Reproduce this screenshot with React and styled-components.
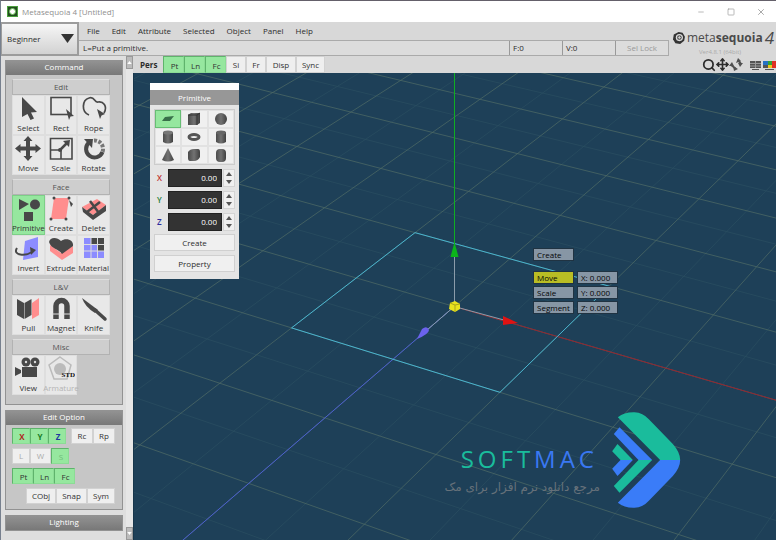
import React from "react";
import styled, { createGlobalStyle, css } from "styled-components";
import { Minus, Square, X as CloseIcon, Search, Move } from "lucide-react";

const GlobalStyle = createGlobalStyle`
  * { box-sizing: border-box; }
  body { margin: 0; }
  body, button, input, select {
    font-family: "Open Sans", "Noto Sans", sans-serif;
    font-size: 8px;
    line-height: 12px;
    color: #2c2c2c;
  }
  button { padding: 0; border: 0; background: none; }
`;

const ink = "#484848";
const green = "#96e79f";

const Window = styled.div`
  min-height: 100vh;
  display: flex;
  flex-direction: column;
  background: #d8d8d8;
  border-top: 1px solid #64606a;
  border-left: 1px solid #77808e;
`;

const TitleBar = styled.header`
  height: 21px;
  display: flex;
  align-items: center;
  gap: 4px;
  padding: 0 10px 0 6px;
  background: #fff;
  color: #8f8f8f;
`;

const TitleText = styled.span`
  flex: 1;
`;

const WindowButtons = styled.div`
  display: flex;
  gap: 20px;
  button { width: 10px; height: 12px; display: grid; place-items: center; }
  svg { color: #999; }
`;

const TopArea = styled.div`
  display: flex;
  height: 34px;
`;

const ModeBox = styled.div`
  position: relative;
  width: 78px;
  border: 2px solid #9c9c9c;
  border-left-width: 1px;
  background: linear-gradient(#f6f6f6, #d2d2d2);
  svg { position: absolute; right: 3px; top: 10px; pointer-events: none; }
`;

const ModeSelect = styled.select`
  appearance: none;
  width: 100%;
  height: 100%;
  padding: 0 5px;
  border: 0;
  background: none;
`;

const MenuColumn = styled.div`
  flex: 1;
  display: flex;
  flex-direction: column;
  min-width: 0;
`;

const MenuBar = styled.nav`
  height: 18px;
  display: flex;
  align-items: center;
  gap: 12px;
  padding: 0 8px;
`;

const StatusBar = styled.div`
  height: 16px;
  display: flex;
  background: #dcdcdc;
  border: 1px solid #aaa;
  border-left: 0;
`;

const StatusText = styled.span`
  flex: 1;
  padding: 1px 4px;
`;

const StatusCell = styled.span`
  width: 53px;
  padding: 1px 3px;
  border-left: 1px solid #999;
`;

const LockButton = styled.button`
  width: 53px;
  border-left: 1px solid #999;
  color: #999;
`;

const Brand = styled.div`
  width: 107px;
  padding: 6px 2px 0 4px;
  color: #4a4a4a;
`;

const BrandRow = styled.div`
  height: 20px;
  display: flex;
  align-items: center;
  gap: 2px;
  font-size: 12px;
  line-height: 20px;
`;

const BrandFour = styled.i`
  font-size: 17px;
`;

const Version = styled.div`
  padding-left: 26px;
  font-size: 6px;
  line-height: 8px;
  color: #aaa;
`;

const Body = styled.div`
  flex: 1;
  display: flex;
  min-height: 0;
`;

const Sidebar = styled.aside`
  width: 132px;
  display: flex;
  justify-content: space-between;
  background: #dedede;
`;

const Panels = styled.div`
  width: 122px;
  padding: 4px 0 0 4px;
  display: flex;
  flex-direction: column;
  gap: 5px;
`;

const Panel = styled.section`
  border: 1px solid #929292;
  background: #c6c6c6;
`;

const PanelTitle = styled.h2`
  margin: 0;
  height: 14px;
  font-size: 8px;
  line-height: 12px;
  font-weight: 400;
  text-align: center;
  color: #fff;
  background: linear-gradient(#929292, #787878);
`;

const PanelBody = styled.div`
  padding: 4px 12px 9px 6px;
  display: flex;
  flex-direction: column;
  gap: 4px;
`;

const GroupTitle = styled.h3`
  margin: 0;
  height: 16px;
  font-size: 8px;
  line-height: 14px;
  font-weight: 400;
  text-align: center;
  color: #555;
  background: #cecece;
  border: 1px solid #b2b2b2;
  border-top-color: #dedede;
`;

const ToolGrid = styled.div`
  display: grid;
  grid-template-columns: repeat(3, minmax(0, 1fr));
`;

const ToolButton = styled.button`
  height: 40px;
  display: flex;
  flex-direction: column;
  align-items: center;
  justify-content: flex-end;
  background: ${(p) => (p.$on ? green : "#e8e8e8")};
  border: 1px solid ${(p) => (p.$on ? "#7dcf88" : "#dedede")};
  color: ${(p) => (p.$faded ? "#b4b4b4" : "#333")};
  white-space: nowrap;
  svg { flex: none; }
`;

const Scroll = styled.div`
  width: 7px;
  display: flex;
  flex-direction: column;
  justify-content: space-between;
  background: #e6e6e6;
  button { height: 13px; border: 1px solid #999; background: #bbb; color: #fff; display: grid; place-items: center; }
`;

const OptionRows = styled.div`
  padding: 3px 5px 5px 6px;
  display: flex;
  flex-direction: column;
  gap: 4px;
`;

const OptionRow = styled.div`
  display: flex;
  padding-left: ${(p) => (p.$indent ? 14 : 0)}px;
`;

const toggled = css`
  background: ${green};
  border-color: #5fb36c #8bdc95 #8bdc95 #5fb36c;
  padding: 2px 0 0 2px;
`;

const Toggle = styled.button`
  width: ${(p) => p.$w || 18}px;
  height: ${(p) => p.$h || 16}px;
  border: 1px solid #d2d2d2;
  background: #efefef;
  color: ${(p) => p.$color || "#333"};
  font-weight: ${(p) => (p.$bold ? 700 : 400)};
  margin-left: ${(p) => (p.$apart ? 5 : 0)}px;
  ${(p) => p.$on && toggled}
`;

const Main = styled.main`
  flex: 1;
  min-width: 0;
  display: flex;
  flex-direction: column;
`;

const ViewBar = styled.div`
  height: 17px;
  display: flex;
  padding-left: 7px;
`;

const ViewName = styled.strong`
  width: 23px;
  line-height: 18px;
`;

const ViewTools = styled.div`
  margin-left: auto;
  display: flex;
  align-items: center;
  color: #505050;
  button { display: grid; }
`;

const Viewport = styled.div`
  position: relative;
  flex: 1;
  overflow: hidden;
  background: #1e4058;
  border-left: 1px solid #17364b;
`;

const Scene = styled.svg`
  position: absolute;
  inset: 0;
  width: 100%;
  height: 100%;
`;

const Palette = styled.section`
  position: absolute;
  left: 16px;
  top: 10px;
  width: 89px;
  background: #e4e4e4;
  border-top: 7px solid #fff;
  display: flex;
  flex-direction: column;
`;

const PaletteTitle = styled.h2`
  margin: 0;
  height: 15px;
  font-size: 8px;
  line-height: 15px;
  font-weight: 400;
  text-align: center;
  color: #fff;
  background: #979797;
`;

const PaletteBody = styled.div`
  padding: 4px 4px 6px;
  display: flex;
  flex-direction: column;
  gap: 3px;
`;

const ShapeGrid = styled.div`
  display: grid;
  grid-template-columns: repeat(3, 1fr);
  border: 1px solid #ccc;
`;

const ShapeButton = styled.button`
  height: 18px;
  display: grid;
  place-items: center;
  background: ${(p) => (p.$on ? green : "#f0f0f0")};
  border: 1px solid ${(p) => (p.$on ? "#68be75" : "#e2e2e2")};
`;

const AxisRow = styled.div`
  display: flex;
  align-items: center;
  height: 19px;
  label { width: 14px; padding-left: 3px; font-weight: 600; color: ${(p) => p.$color}; }
  input {
    flex: 1;
    min-width: 0;
    height: 18px;
    padding: 0 4px;
    border: 1px solid #222;
    background: #333;
    color: #fff;
    text-align: right;
  }
`;

const Spinner = styled.div`
  width: 12px;
  height: 18px;
  margin-left: 1px;
  display: grid;
  background: #f0f0f0;
  border: 1px solid #d4d4d4;
  button { display: grid; place-items: center; }
`;

const WideButton = styled.button`
  height: 17px;
  margin-bottom: 1px;
  background: #f0f0f0;
  border: 1px solid #d0d0d0;
`;

const Handles = styled.div`
  position: absolute;
  left: 399px;
  top: 175px;
  display: grid;
  grid-template-columns: 41px 41px;
  gap: 2px 3px;
`;

const Handle = styled.button`
  height: 13px;
  padding: 0 3px;
  line-height: 12px;
  text-align: left;
  white-space: nowrap;
  color: #050505;
  border: 1px solid #203342;
  background: ${(p) => (p.$on ? "#b9bd24" : "#8796a5")};
  ${(p) => p.$first && css`
    grid-column: 1 / -1;
    width: 41px;
    margin-bottom: 8px;
  `}
`;

const Watermark = styled.div`
  position: absolute;
  right: 94px;
  bottom: 30px;
  display: flex;
  align-items: center;
  gap: 11px;
`;

const WatermarkText = styled.div`
  display: flex;
  flex-direction: column;
  align-items: flex-end;
  padding-top: 22px;
`;

const Wordmark = styled.div`
  padding-right: 2px;
  font-size: 24px;
  line-height: 32px;
  letter-spacing: 4px;
  color: #1abc9c;
  span { color: #3a78f2; }
`;

const Tagline = styled.div`
  font-family: "DejaVu Sans", sans-serif;
  font-size: 12px;
  line-height: 24px;
  white-space: nowrap;
  color: #66717a;
`;

const Tri = ({ up, size = 6, color = "#555" }) => (
  <svg width={size} height={size - 2} viewBox="0 0 6 4" aria-hidden="true">
    <path d={up ? "M0 4L3 0L6 4Z" : "M0 0L3 4L6 0Z"} fill={color} />
  </svg>
);

const ToolIcon = ({ children }) => (
  <svg width="28" height="27" viewBox="0 0 28 27" fill={ink} aria-hidden="true">{children}</svg>
);

const red = "#ff8e8e";
const violet = "#8c8cff";

const toolIcons = {
  Select: <path d="M8 2L23 17L17 17.500L20 23.500L16.500 25L13.500 19L8 22Z" />,
  Rect: <><rect x="4" y="2.500" width="20" height="17" fill="none" stroke={ink} strokeWidth="1.600" /><path d="M19 14L27 21L23.500 21.500L22 25Z" /></>,
  Rope: <><path d="M9 20C1 17 2 5 9 3C15 1 14 8 18 7C23 6 28 11 24 18" fill="none" stroke={ink} strokeWidth="1.700" /><path d="M17 14L25 19L21.500 20.500L20 24Z" /></>,
  Move: <path d="M14 1L18.500 6H16V11.500H21.500V9L27 13.500L21.500 18V15.500H16V21H18.500L14 26L9.500 21H12V15.500H6.500V18L1 13.500L6.500 9V11.500H12V6H9.500Z" />,
  Scale: <><path d="M3.500 3.500H25V24H3.500ZM3.500 15H14V24" fill="none" stroke={ink} strokeWidth="1.600" /><path d="M13 15L20 8" stroke={ink} strokeWidth="2.500" /><path d="M16 6L23 5L22 12Z" /><circle cx="13" cy="15" r="2" /></>,
  Rotate: <><path d="M9 7.500A8.500 8.500 0 1 0 22.500 17" fill="none" stroke={ink} strokeWidth="4" /><path d="M4 4L13 4L12 13Z" /><path d="M14 5.500A8.500 8.500 0 0 1 22.500 17" fill="none" stroke="#777" strokeWidth="4" strokeDasharray="3 1.500" /></>,
  Primitive: <><path d="M5 4L15 9L5 15Z" /><circle cx="21" cy="9.500" r="5" /><rect x="10" y="17" width="9" height="9" /></>,
  Create: <><path d="M7 3H22L19 24H4Z" fill={red} /><circle cx="7" cy="3" r="1.500" /><circle cx="22" cy="3" r="1.500" /><circle cx="19" cy="24" r="1.500" /><circle cx="4" cy="24" r="1.500" /><path d="M22 5L26 9L24 12Z" /></>,
  Delete: <><path d="M2 12L17 4L26 10L13 20Z" fill={red} /><path d="M2 12L13 20V25L3 17ZM13 20L26 10V16L13 25Z" /><path d="M10 6L19 18M20 7L7 17" stroke={ink} strokeWidth="2.500" /></>,
  Invert: <><path d="M11 6L24 2V22L9 25Z" fill={violet} /><path d="M3 13C-2 21 12 21 18 17" fill="none" stroke={ink} strokeWidth="2" /><path d="M16 12L22 15L17 20Z" /></>,
  Extrude: <><path d="M3 10V16L15 25L26 18V11L14 18Z" fill={red} /><path d="M2 7C3 2 10 2 14 6C19 2 27 5 26 11L15 19C12 14 4 14 2 7Z" /></>,
  Material: <><path d="M4 3H24V23H4Z" fill={violet} /><path d="M11 3H24V16H18V10H11Z" /><path d="M11 3V23M17.500 3V23M4 9.500H24M4 16H24" stroke="#ddd" /></>,
  Pull: <><path d="M3 4L10 8V24L3 20ZM10.500 8L17.500 4V20L10.500 24Z" /><path d="M18 8L25 3V20L18 24Z" fill={red} /></>,
  Magnet: <><path d="M9 24V11A5 5 0 0 1 20 11V24" fill="none" stroke={ink} strokeWidth="5.500" /><path d="M5 19H13M16 19H24" stroke="#ddd" /></>,
  Knife: <><path d="M2 3L18 15L15 18Q5 12 2 3Z" /><path d="M15 15L25 24" stroke={ink} strokeWidth="3.500" strokeLinecap="round" /></>,
  View: <><circle cx="12" cy="7" r="4.500" /><circle cx="21" cy="7" r="4.500" /><path d="M8 12H23V22H8ZM1 12L7 15V18L1 21Z" /><circle cx="12" cy="7" r="1.200" fill="#ddd" /><circle cx="21" cy="7" r="1.200" fill="#ddd" /></>,
  Armature: <><path d="M13 2L24 10L20 24H7L2 10Z" fill="none" stroke="#bbb" strokeWidth="1.500" /><circle cx="13" cy="14" r="6" fill="#bbb" /><text x="28" y="22" textAnchor="end" fontSize="7" fontWeight="700" fill="#111" fontFamily="Liberation Serif, serif">STD</text></>,
};

const groups = [
  ["Edit", ["Select", "Rect", "Rope", "Move", "Scale", "Rotate"]],
  ["Face", ["Primitive", "Create", "Delete", "Invert", "Extrude", "Material"]],
  ["L&V", ["Pull", "Magnet", "Knife"]],
  ["Misc", ["View", "Armature"]],
];

const ShapeIcon = ({ children }) => (
  <svg width="16" height="16" viewBox="0 0 16 16" aria-hidden="true">
    <defs>
      <linearGradient id="solid"><stop stopColor="#4a4a4a" /><stop offset="0.500" stopColor="#727272" /><stop offset="1" stopColor="#404040" /></linearGradient>
    </defs>
    <g fill="url(#solid)">{children}</g>
  </svg>
);

const shapes = [
  ["Plane", <path d="M5 6L14 5L10 10L2 10Z" fill="#39704a" />],
  ["Box", <><path d="M2 4L5 2H14V12L11 14H2Z" /><path d="M2 4H11V14M11 4L14 2" stroke="#333" fill="none" /></>],
  ["Sphere", <circle cx="8" cy="8" r="6" />],
  ["Cylinder", <><path d="M3 3V13Q8 16 13 13V3Z" /><ellipse cx="8" cy="3.500" rx="5" ry="2" fill="#777" /></>],
  ["Torus", <ellipse cx="8" cy="8" rx="5" ry="2.500" fill="none" stroke="#555" strokeWidth="3" />],
  ["Tube", <><path d="M3 3V13Q8 16 13 13V3Z" /><ellipse cx="8" cy="3.500" rx="5" ry="2" fill="#666" /></>],
  ["Cone", <path d="M8 1L14 13Q8 16 2 13Z" />],
  ["Rounded box", <path d="M2 5Q4 2 8 2H12Q14 2 14 5V10Q12 14 8 14H4Q2 14 2 11Z" />],
  ["Capsule", <rect x="3" y="2" width="10" height="13" rx="4" />],
];

/* Perspective mapping of the ground plane to viewport coordinates. */
const project = (u, v) => {
  const w = 1 - 0.025 * u - 0.05 * v;
  return [(454.3 + 89.1 * u - 80.95 * v) / w - 134, (306.5 + 21.6 * u + 34.8 * v) / w - 73];
};
const segment = (a, b) => `M${project(...a).join(" ")}L${project(...b).join(" ")}`;
const range = Array.from({ length: 61 }, (_, i) => i / 2 - 20);
const gridPath = (major) =>
  range
    .filter((n) => Number.isInteger(n) === major && n <= 7)
    .map((n) => segment([n, -20], [n, 8]) + segment([-20, n], [8, n]))
    .join("");
const [ox, oy] = project(0, 0);

const SceneDrawing = () => (
  <Scene aria-hidden="true" fill="none">
    <path d={gridPath(false)} stroke="#2b4f61" strokeWidth="1" opacity="0.700" />
    <path d={gridPath(true)} stroke="#4e6a66" strokeWidth="1" opacity="0.750" />
    <path d={segment([0, 0], [7, 0])} stroke="#94252f" />
    <path d={segment([0, 0], [0, 5])} stroke="#4a5ed0" />
    <path d={segment([-1, -1], [1, -1]) + segment([1, -1], [1, 1]) + segment([1, 1], [-1, 1]) + segment([-1, 1], [-1, -1])} stroke="#48b4d0" />
    <path d={`M320.500 ${oy}V0`} stroke="#0fae22" />
    <path d={`M320.500 180V${oy}M${ox} ${oy}L370 247M${ox} ${oy}L293 257`} stroke="#8a9caa" />
    <path d="M320.500 169L324.500 184H316.500Z" fill="#0bb51b" />
    <path d="M384 250L369 243V252Z" fill="#e01313" />
    <path d="M283 266L288 256Q293 252 295 257Q295 261 283 266Z" fill="#6b62ee" />
    <path d="M316 230L321 228L326 231V236L321 239L315 236Z" fill="#e8e31e" />
    <path d="M316 230L321 232L326 231M321 232V239" stroke="#aaa51c" />
  </Scene>
);

const axes = [["X", "#c23030"], ["Y", "#24803a"], ["Z", "#2c2c9e"]];

export default function App() {
  return (
    <Window>
      <GlobalStyle />
      <TitleBar>
        <svg width="11" height="11" viewBox="0 0 11 11" aria-hidden="true">
          <rect width="11" height="11" fill="#4aa03c" /><rect x="1" y="1" width="9" height="9" fill="#234d20" /><circle cx="5.500" cy="5.500" r="3" fill="#fff" stroke="#69be56" strokeWidth="1" />
        </svg>
        <TitleText>Metasequoia 4 [Untitled]</TitleText>
        <WindowButtons>
          <button aria-label="Minimize"><Minus size={8} /></button>
          <button aria-label="Maximize"><Square size={8} /></button>
          <button aria-label="Close"><CloseIcon size={10} /></button>
        </WindowButtons>
      </TitleBar>
      <TopArea>
        <ModeBox>
          <ModeSelect aria-label="Mode" defaultValue="Beginner"><option>Beginner</option></ModeSelect>
          <svg width="13" height="10" aria-hidden="true"><path d="M0 0H13L6.500 9Z" fill="#333" /></svg>
        </ModeBox>
        <MenuColumn>
          <MenuBar>
            {["File", "Edit", "Attribute", "Selected", "Object", "Panel", "Help"].map((m) => <button key={m}>{m}</button>)}
          </MenuBar>
          <StatusBar>
            <StatusText>L=Put a primitive.</StatusText>
            <StatusCell>F:0</StatusCell>
            <StatusCell>V:0</StatusCell>
            <LockButton>Sel Lock</LockButton>
          </StatusBar>
        </MenuColumn>
        <Brand>
          <BrandRow>
            <svg width="16" height="16" viewBox="0 0 15 15" aria-hidden="true">
              <path d="M7 0L12 1L15 6L14 11L9 15L3 14L0 9L1 3Z" fill="#333" /><circle cx="8" cy="7" r="4.500" fill="#ddd" /><circle cx="8" cy="7" r="3" fill="#555" /><path d="M6 7H10M8 5V9" stroke="#ddd" />
            </svg>
            <span>meta<b>sequoia</b></span><BrandFour>4</BrandFour>
          </BrandRow>
          <Version>Ver4.8.1 (64bit)</Version>
        </Brand>
      </TopArea>
      <Body>
        <Sidebar>
          <Panels>
            <Panel>
              <PanelTitle>Command</PanelTitle>
              <PanelBody>
                {groups.map(([name, tools]) => (
                  <div key={name}>
                    <GroupTitle>{name}</GroupTitle>
                    <ToolGrid>
                      {tools.map((t) => (
                        <ToolButton key={t} $on={t === "Primitive"} $faded={t === "Armature"} aria-pressed={t === "Primitive"}>
                          <ToolIcon>{toolIcons[t]}</ToolIcon>
                          {t}
                        </ToolButton>
                      ))}
                    </ToolGrid>
                  </div>
                ))}
              </PanelBody>
            </Panel>
            <Panel>
              <PanelTitle>Edit Option</PanelTitle>
              <OptionRows>
                <OptionRow>
                  <Toggle $on $bold $color="#b02a22">X</Toggle>
                  <Toggle $on $bold $color="#177a24">Y</Toggle>
                  <Toggle $on $bold $color="#2038a0">Z</Toggle>
                  <Toggle $w={22} $apart>Rc</Toggle>
                  <Toggle $w={22}>Rp</Toggle>
                </OptionRow>
                <OptionRow>
                  <Toggle $color="#aaa">L</Toggle>
                  <Toggle $w={21} $color="#aaa">W</Toggle>
                  <Toggle $on $color="#6fbd7b">S</Toggle>
                </OptionRow>
                <OptionRow>
                  <Toggle $on $w={21}>Pt</Toggle>
                  <Toggle $on $w={21}>Ln</Toggle>
                  <Toggle $on $w={21}>Fc</Toggle>
                </OptionRow>
                <OptionRow $indent>
                  <Toggle $w={30}>CObj</Toggle>
                  <Toggle $w={31}>Snap</Toggle>
                  <Toggle $w={28}>Sym</Toggle>
                </OptionRow>
              </OptionRows>
            </Panel>
            <Panel><PanelTitle>Lighting</PanelTitle></Panel>
          </Panels>
          <Scroll>
            <button aria-label="Scroll up"><Tri up size={5} color="#fff" /></button>
            <button aria-label="Scroll down"><Tri size={5} color="#fff" /></button>
          </Scroll>
        </Sidebar>
        <Main>
          <ViewBar>
            <ViewName>Pers</ViewName>
            <Toggle $h={17} $w={21} $on>Pt</Toggle>
            <Toggle $h={17} $w={21} $on>Ln</Toggle>
            <Toggle $h={17} $w={21} $on>Fc</Toggle>
            <Toggle $h={17} $w={20}>Si</Toggle>
            <Toggle $h={17} $w={20}>Fr</Toggle>
            <Toggle $h={17} $w={30}>Disp</Toggle>
            <Toggle $h={17} $w={29}>Sync</Toggle>
            <ViewTools>
              <button aria-label="Zoom"><Search size={14} strokeWidth={3} /></button>
              <button aria-label="Pan"><Move size={13} strokeWidth={3} /></button>
              <button aria-label="Orbit">
                <svg width="14" height="13" viewBox="0 0 14 13" fill="#505050"><path d="M9 0L12 3L7 5ZM5 13L4 8L9 11ZM0 8L3 4L5 8ZM14 5L11 9L9 5Z" /><path d="M2 7Q6 10 7 11M12 6Q10 3 9 2" stroke="#505050" fill="none" strokeWidth="2" /></svg>
              </button>
              <button aria-label="Layout">
                <svg width="33" height="12" viewBox="0 0 33 12"><path d="M7 2H18V9H7ZM9 10H16V11H9Z" fill="#555" /><path d="M7 4.500H18M7 7H18M12.500 2V9" stroke="#999" /><path d="M20 2H25V6H20Z" fill="#2671c5" /><path d="M25 2H29V6H25Z" fill="#30a33a" /><path d="M29 2H33V9H29Z" fill="#df3024" /><path d="M20 6H25V9H20Z" fill="#555" /><path d="M25 6H29V9H25Z" fill="#edc719" /><path d="M22 10H31V11H22Z" fill="#555" /></svg>
              </button>
            </ViewTools>
          </ViewBar>
          <Viewport>
            <SceneDrawing />
            <Palette>
              <PaletteTitle>Primitive</PaletteTitle>
              <PaletteBody>
                <ShapeGrid>
                  {shapes.map(([name, art], i) => (
                    <ShapeButton key={name} aria-label={name} $on={i === 0}><ShapeIcon>{art}</ShapeIcon></ShapeButton>
                  ))}
                </ShapeGrid>
                {axes.map(([axis, color]) => (
                  <AxisRow key={axis} $color={color}>
                    <label htmlFor={`pos-${axis}`}>{axis}</label>
                    <input id={`pos-${axis}`} defaultValue="0.00" />
                    <Spinner>
                      <button aria-label={`Increase ${axis}`}><Tri up /></button>
                      <button aria-label={`Decrease ${axis}`}><Tri /></button>
                    </Spinner>
                  </AxisRow>
                ))}
                <WideButton>Create</WideButton>
                <WideButton>Property</WideButton>
              </PaletteBody>
            </Palette>
            <Handles>
              <Handle $first>Create</Handle>
              <Handle $on>Move</Handle><Handle>X: 0.000</Handle>
              <Handle>Scale</Handle><Handle>Y: 0.000</Handle>
              <Handle>Segment</Handle><Handle>Z: 0.000</Handle>
            </Handles>
            <Watermark>
              <WatermarkText>
                <Wordmark>SOFT<span>MAC</span></Wordmark>
                <Tagline lang="fa" dir="rtl">مرجع دانلود نرم افزار برای مک</Tagline>
              </WatermarkText>
              <svg width="71" height="100" viewBox="515 30 212 300" aria-hidden="true">
                <g fill="#1abc9c">
                  <path d="M535 52Q555 36 585 37Q610 38 628 58L700 132Q722 157 722 180H662Z" />
                  <path d="M540 278L638 180H597L523 258Z" />
                  <path d="M534 132L580 180H543L518 154Z" />
                </g>
                <g fill="#3a7cf8">
                  <path d="M535 308Q555 324 585 323Q610 322 628 302L700 228Q722 203 722 180H662Z" />
                  <path d="M540 82L638 180H597L523 102Z" />
                  <path d="M534 228L580 180H543L518 206Z" />
                </g>
              </svg>
            </Watermark>
          </Viewport>
        </Main>
      </Body>
    </Window>
  );
}
